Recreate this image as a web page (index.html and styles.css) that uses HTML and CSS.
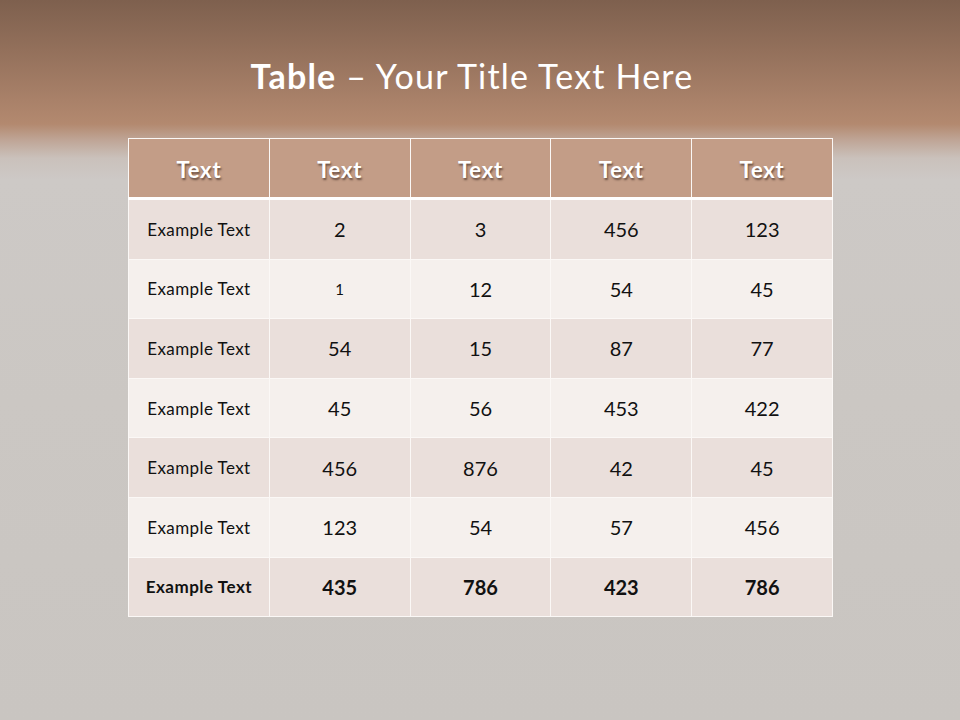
FILE: index.html
```html
<!DOCTYPE html>
<html>
<head>
<meta charset="utf-8">
<link rel="stylesheet" href="styles.css">
</head>
<body>
<div class="slide">
  <h1 class="title"><b>Table</b> – Your Title Text Here</h1>
  <table class="grid">
    <thead>
      <tr><th>Text</th><th>Text</th><th>Text</th><th>Text</th><th>Text</th></tr>
    </thead>
    <tbody>
      <tr class="dark"><td class="label">Example Text</td><td>2</td><td>3</td><td>456</td><td>123</td></tr>
      <tr class="light"><td class="label">Example Text</td><td class="small">1</td><td>12</td><td>54</td><td>45</td></tr>
      <tr class="dark"><td class="label">Example Text</td><td>54</td><td>15</td><td>87</td><td>77</td></tr>
      <tr class="light"><td class="label">Example Text</td><td>45</td><td>56</td><td>453</td><td>422</td></tr>
      <tr class="dark"><td class="label">Example Text</td><td>456</td><td>876</td><td>42</td><td>45</td></tr>
      <tr class="light"><td class="label">Example Text</td><td>123</td><td>54</td><td>57</td><td>456</td></tr>
      <tr class="dark total"><td class="label">Example Text</td><td>435</td><td>786</td><td>423</td><td>786</td></tr>
    </tbody>
  </table>
</div>
</body>
</html>
```
FILE: styles.css
```css
html, body {
  margin: 0;
  padding: 0;
}
body {
  font-family: "Lato", "Open Sans", sans-serif;
}
.slide {
  width: 960px;
  height: 720px;
  box-sizing: border-box;
  padding-top: 51px;
  background: linear-gradient(to bottom,
    #7e604e 0px,
    #93705b 50px,
    #a98169 100px,
    #b3896f 124px,
    #bfa596 140px,
    #cac1bb 158px,
    #cdc9c6 180px,
    #cbc7c3 400px,
    #c9c5c1 720px);
  overflow: hidden;
}
.title {
  margin: 0;
  height: 87px;
  padding-right: 16px;
  text-align: center;
  color: #ffffff;
  font-weight: normal;
  font-size: 34px;
  line-height: 50px;
  letter-spacing: 1.2px;
}
.title b {
  font-weight: bold;
}
.grid {
  margin-left: 128px;
  width: 705px;
  border-collapse: collapse;
  table-layout: fixed;
  border: 1px solid #f4eeeb;
}
.grid th, .grid td {
  border: 1px solid #fbf8f6;
  text-align: center;
  padding: 0;
  color: #111;
}
.grid th {
  height: 56px;
  padding-top: 2px;
  background: #c39d87;
  color: #ffffff;
  font-size: 22px;
  font-weight: bold;
  letter-spacing: 0.8px;
  text-shadow: 1px 2px 2px rgba(60, 40, 30, 0.65);
  border-bottom: 3px solid #ffffff;
}
.grid td {
  height: 58.6px;
  font-size: 20px;
}
.grid td.label {
  font-size: 17px;
  letter-spacing: 0.4px;
}
.grid td.small {
  font-size: 15px;
}
.dark td {
  background: #eadfdb;
}
.light td {
  background: #f5f0ed;
}
.total td {
  font-weight: bold;
}
.total td.label {
  letter-spacing: 0.5px;
}
```
